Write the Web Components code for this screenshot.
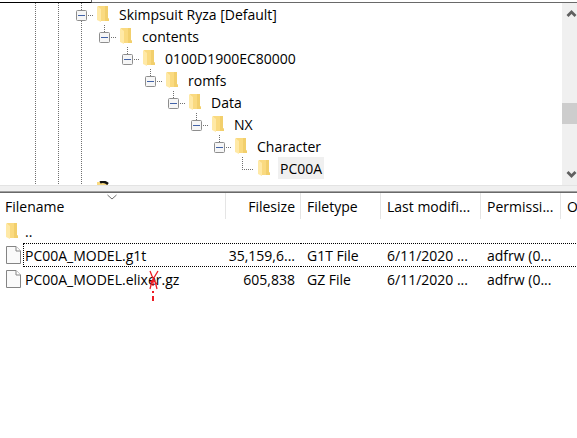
<!DOCTYPE html>
<html lang="en">
<head>
    <meta charset="UTF-8">
    <meta name="viewport" content="width=device-width,initial-scale=1">
    <title>File transfer</title>
    <style>
        html, body {
            height: 100%;
        }
        body {
            margin: 0;
            overflow: hidden;
            background: #fff;
            color: #000;
            font: 14px/22px "Open Sans", "Noto Sans", sans-serif;
        }
    </style>
</head>
<body>
<file-manager>
    <folder-tree slot="tree">
        <tree-row depth="0">Skimpsuit Ryza [Default]</tree-row>
        <tree-row depth="1">contents</tree-row>
        <tree-row depth="2">0100D1900EC80000</tree-row>
        <tree-row depth="3">romfs</tree-row>
        <tree-row depth="4">Data</tree-row>
        <tree-row depth="5">NX</tree-row>
        <tree-row depth="6">Character</tree-row>
        <tree-row depth="7" leaf selected>PC00A</tree-row>
    </folder-tree>
    <file-list slot="list"></file-list>
</file-manager>

<script>
    // shared shadow root helper
    function render(el, html) {
        const shadow = el.attachShadow({mode: 'open'})
        shadow.innerHTML = html
        return shadow
    }

    // folder and blank page icons
    class FileIcon extends HTMLElement {
        constructor() {
            super()
            const folder = `
                <svg width="12" height="16" viewBox="0 0 12 16">
                    <path d="M1 0H11V12L12 13V15H3Z" fill="#fada80"/>
                    <path d="M8 0H11V12L12 13V15H8Z" fill="#f2cf6c"/>
                    <path d="M0 0L4 3V16L0 14Z" fill="#ffe9a6"/>
                </svg>`
            const page = `
                <svg width="15" height="18" viewBox="0 0 15 18">
                    <path d="M.5 .5H10L14.5 5V17.5H.5Z" fill="#fafafa" stroke="#848484"/>
                    <path d="M10 .5V5H14.5" fill="#fff" stroke="#848484"/>
                </svg>`
            render(this, `
                <style>
                    :host { display: inline-flex; flex: none; }
                    svg { display: block; }
                </style>
                ${this.getAttribute('kind') === 'page' ? page : folder}`)
        }
    }

    class TreeRow extends HTMLElement {
        constructor() {
            super()
            const box = `
                <button type="button" aria-label="Collapse">
                    <svg width="17" height="22" viewBox="0 0 17 22">
                        <path d="M5.5 0V7M12 12.5H17" stroke="#707070" stroke-dasharray="1 1"/>
                        <rect x=".5" y="7.5" width="10" height="10" rx="1" fill="#f6f6f6" stroke="#8e8e8e"/>
                        <path d="M2 12.5H9" stroke="#4263a8"/>
                    </svg>
                </button>`
            const elbow = `
                <svg width="17" height="22" viewBox="0 0 17 22">
                    <path d="M5.5 0V12M5 12.5H17" stroke="#707070" stroke-dasharray="1 1"/>
                </svg>`
            render(this, `
                <style>
                    :host {
                        display: flex;
                        align-items: center;
                        height: 22px;
                        padding-left: calc(76px + 23px * var(--depth));
                        white-space: nowrap;
                    }
                    button { padding: 0; border: 0; background: none; }
                    svg { display: block; }
                    file-icon { margin: 0 8px 0 4px; }
                    .label { height: 22px; padding: 0 2px; line-height: 24px; }
                    :host([selected]) .label { background: #f0f0f0; }
                </style>
                ${this.hasAttribute('leaf') ? elbow : box}
                <file-icon kind="folder"></file-icon>
                <span class="label"><slot></slot></span>`)
            this.style.setProperty('--depth', this.getAttribute('depth'))
        }
    }

    class FolderTree extends HTMLElement {
        constructor() {
            super()
            render(this, `
                <style>
                    :host { display: flex; overflow: hidden; }
                    .rows {
                        --dots: repeating-linear-gradient(#707070 0 1px, transparent 1px 2px);
                        flex: 1;
                        min-width: 0;
                        background:
                            var(--dots) 35px 0 / 1px 100% no-repeat,
                            var(--dots) 58px 0 / 1px 100% no-repeat,
                            var(--dots) 81px 0 / 1px 100% no-repeat;
                    }
                    /* top edge of the next row, cut off by the pane */
                    .next { display: block; margin: 2px 0 0 97px; }
                </style>
                <div class="rows">
                    <slot></slot>
                    <svg class="next" width="13" height="4" viewBox="0 0 13 4">
                        <path d="M0 1H10L11 3V4H0Z" fill="#fada80"/>
                        <path d="M3 1.5Q7 -.5 11 3" fill="none" stroke="#111" stroke-width="2.4"/>
                    </svg>
                </div>
                <scroll-strip></scroll-strip>`)
        }
    }

    class ScrollStrip extends HTMLElement {
        constructor() {
            super()
            render(this, `
                <style>
                    :host { display: flex; flex-direction: column; width: 15px; background: #f0f0f0; }
                    button { display: block; padding: 0; border: 0; background: none; }
                    svg { display: block; }
                    .above { flex: 80; }
                    .thumb { height: 21px; background: #cdcdcd; }
                    .below { flex: 41; }
                </style>
                <button type="button" aria-label="Scroll up">
                    <svg width="15" height="20" viewBox="0 0 15 20"><path d="M5.5 13L9.5 9L13.5 13" fill="none" stroke="#606060" stroke-width="2.8"/></svg>
                </button>
                <div class="above"></div>
                <div class="thumb"></div>
                <div class="below"></div>
                <button type="button" aria-label="Scroll down">
                    <svg width="15" height="20" viewBox="0 0 15 20"><path d="M5.5 7L9.5 11L13.5 7" fill="none" stroke="#606060" stroke-width="2.8"/></svg>
                </button>`)
        }
    }

    class FileList extends HTMLElement {
        constructor() {
            super()
            const files = [
                ['PC00A_MODEL.g1t', '35,159,6...', 'G1T File', '6/11/2020 ...', 'adfrw (0...'],
                ['PC00A_MODEL.elixer.gz', '605,838', 'GZ File', '6/11/2020 ...', 'adfrw (0...']
            ]
            // red pen scribble over the second name
            const pen = `
                <svg class="pen" width="12" height="32" viewBox="0 0 12 32">
                    <path d="M2 1L4 6L7 11L9 19M10 1L7 6L4 11L2 19M2 12L5 10L9 14M5 10V16" fill="none" stroke="#ed1c24" stroke-width="1.3"/>
                    <path d="M5 21V23M5 26V31" stroke="#ed1c24" stroke-width="2"/>
                </svg>`
            const rows = files.map(([name, size, ...rest], i) => `
                <tr class="${i === 0 ? 'focused' : ''}">
                    <td><div class="name"><file-icon kind="page"></file-icon><span>${name}</span>${i === 1 ? pen : ''}</div></td>
                    <td class="size">${size}</td>
                    ${rest.map(text => `<td>${text}</td>`).join('')}
                    <td></td>
                </tr>`).join('')
            render(this, `
                <style>
                    :host { display: block; }
                    table { width: 100%; table-layout: fixed; border-collapse: separate; border-spacing: 0; }
                    th, td {
                        box-sizing: border-box;
                        height: 24px;
                        padding: 2px 0 0 6px;
                        font-weight: 400;
                        text-align: left;
                        white-space: nowrap;
                        overflow: hidden;
                    }
                    th { height: 26px; }
                    th:not(:last-child) {
                        background: linear-gradient(#e5e5e5, #e5e5e5) right 0 top 0 / 1px 26px no-repeat;
                    }
                    th:first-child { padding-left: 5px; }
                    td:first-child { padding-top: 0; overflow: visible; }
                    th:last-child { overflow: visible; }
                    .size { padding: 2px 6px 0 0; text-align: right; }
                    .name { display: flex; align-items: center; position: relative; height: 24px; }
                    .name span { flex: 1; height: 24px; padding-left: 4px; line-height: 26px; }
                    .up span { padding-left: 7px; }
                    .head { position: relative; }
                    .sort { position: absolute; left: 102px; top: 1px; }
                    .pen { position: absolute; left: 142px; top: 3px; }
                    /* focus rectangle starts after the icon */
                    .focused td, .focused .name span {
                        --dash: repeating-linear-gradient(90deg, #000 0 1px, transparent 1px 2px);
                        background: var(--dash) 0 0 / 100% 1px no-repeat, var(--dash) 0 100% / 100% 1px no-repeat;
                    }
                    .focused td:first-child { background: none; }
                    .focused .name span {
                        box-sizing: border-box;
                        margin-left: 2px;
                        padding-left: 1px;
                        border-left: 1px dotted #000;
                    }
                </style>
                <table>
                    <colgroup>
                        <col style="width:226px"><col style="width:75px"><col style="width:80px">
                        <col style="width:100px"><col style="width:80px"><col>
                    </colgroup>
                    <thead>
                        <tr>
                            <th class="head">Filename
                                <svg class="sort" width="20" height="6" viewBox="0 0 20 6"><path d="M5.5 1L10 5L14.5 1" fill="none" stroke="#707070"/></svg>
                            </th>
                            <th class="size">Filesize</th>
                            <th>Filetype</th>
                            <th>Last modifi...</th>
                            <th>Permissi...</th>
                            <th>O</th>
                        </tr>
                    </thead>
                    <tbody>
                        <tr>
                            <td><div class="name up"><file-icon kind="folder"></file-icon><span>..</span></div></td>
                            <td></td><td></td><td></td><td></td><td></td>
                        </tr>
                        ${rows}
                    </tbody>
                </table>`)
        }
    }

    class FileManager extends HTMLElement {
        constructor() {
            super()
            render(this, `
                <style>
                    :host { display: flex; flex-direction: column; height: 100%; }
                    .edge { display: flex; height: 3px; flex: none; }
                    .edge div { box-sizing: border-box; border-bottom: 1px solid #696969; flex: 1; }
                    .edge .combo { flex: 0 0 92px; border-bottom-color: #000; border-right: 1px solid #696969; }
                    .tree { display: flex; flex: none; }
                    ::slotted(folder-tree) { flex: 1; }
                    .splitter {
                        flex: none;
                        box-sizing: border-box;
                        height: 8px;
                        border-top: 1px solid #e3e3e3;
                        border-bottom: 1px solid #696969;
                        background: linear-gradient(#f0f0f0 5px, #a0a0a0 5px);
                    }
                    .list { flex: 1; min-height: 0; }
                </style>
                <div class="edge"><div class="combo"></div><div></div></div>
                <div class="tree"><slot name="tree"></slot></div>
                <div class="splitter"></div>
                <div class="list"><slot name="list"></slot></div>`)
        }
    }

    customElements.define('file-icon', FileIcon)
    customElements.define('tree-row', TreeRow)
    customElements.define('scroll-strip', ScrollStrip)
    customElements.define('folder-tree', FolderTree)
    customElements.define('file-list', FileList)
    customElements.define('file-manager', FileManager)
</script>
</body>
</html>
